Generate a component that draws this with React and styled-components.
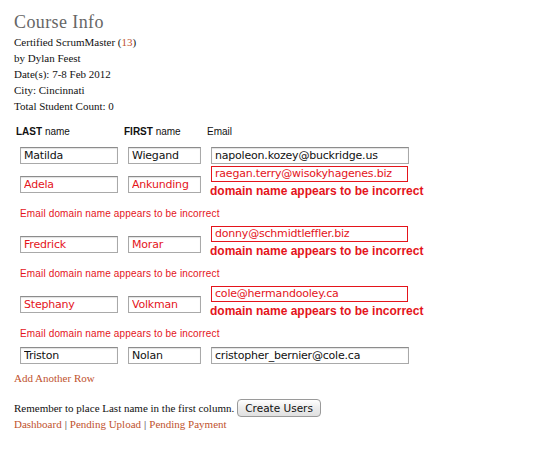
import React from "react";
import styled, { createGlobalStyle } from "styled-components";

const Global = createGlobalStyle`
  body {
    margin: 0;
    background: #ffffff;
    font-family: "Liberation Serif", serif;
  }
`;

const Page = styled.div`
  padding: 11px 14px 20px 14px;
  color: #111;
`;

const Title = styled.h2`
  margin: 0 0 1px 0;
  font-family: "Liberation Serif", serif;
  font-weight: normal;
  font-size: 18px;
  line-height: 22px;
  letter-spacing: 0.4px;
  color: #666;
`;

const Line = styled.div`
  font-size: 11px;
  line-height: 16px;
`;

const Link = styled.a`
  color: #c0522e;
  text-decoration: none;
`;

const Table = styled.div`
  margin-top: 9px;
  margin-left: 2px;
  display: flex;
  flex-direction: column;
  font-family: "Liberation Sans", Arial, sans-serif;
`;

const Row = styled.div`
  display: grid;
  grid-template-columns: 108px 83px auto;
  align-items: center;
  min-height: ${(p) => p.h || 20}px;
`;

const HeadRow = styled(Row)`
  min-height: 18px;
  margin-bottom: 4px;
`;

const HeadCell = styled.div`
  font-size: 10px;
  line-height: 14px;
  color: #111;
  b {
    font-weight: bold;
  }
`;

const Cell = styled.div`
  padding-left: 4px;
  padding-top: ${(p) => (p.low ? 4 : 0)}px;
`;

const Input = styled.input`
  display: block;
  box-sizing: border-box;
  width: ${(p) => p.w}px;
  height: 17px;
  padding: 0 3px;
  margin: 0;
  border: 1px solid #a9a9a9;
  border-top-color: #8c8c8c;
  box-shadow: inset 0 1px 1px rgba(0, 0, 0, 0.12);
  font-family: "DejaVu Sans", sans-serif;
  font-size: 11px;
  letter-spacing: -0.2px;
  line-height: normal;
  color: ${(p) => (p.err ? "#e4141b" : "#111")};
  background: #fff;
  outline: none;
`;

const ErrInput = styled(Input)`
  border: 1px solid #e4141b;
  box-shadow: none;
  height: 16px;
`;

const ErrBold = styled.div`
  font-weight: bold;
  font-size: 12px;
  line-height: 16px;
  color: #e4141b;
  margin-left: -1px;
  margin-top: 1px;
`;

const ErrLine = styled.div`
  font-size: 10px;
  line-height: 14px;
  letter-spacing: 0.15px;
  color: #e4141b;
  padding: 8px 0 4px 4px;
`;

const AddRow = styled.div`
  font-size: 11px;
  line-height: 16px;
  margin-top: 5px;
`;

const Footer = styled.div`
  margin-top: 13px;
  display: flex;
  align-items: center;
  gap: 3px;
  font-size: 11px;
`;

const Button = styled.button`
  height: 18px;
  padding: 0 7px;
  border: 1px solid #9a9a9a;
  border-radius: 4px;
  background: linear-gradient(#ffffff, #ececec 50%, #e0e0e0);
  font-family: "DejaVu Sans", sans-serif;
  font-size: 10.5px;
  line-height: 16px;
  color: #111;
`;

const Links = styled.div`
  font-size: 11px;
  line-height: 16px;
  margin-top: -1px;
  span {
    color: #333;
    margin: 0 3px;
  }
`;

const rows = [
  { last: "Matilda", first: "Wiegand", email: "napoleon.kozey@buckridge.us", bad: false },
  { last: "Adela", first: "Ankunding", email: "raegan.terry@wisokyhagenes.biz", bad: true },
  { last: "Fredrick", first: "Morar", email: "donny@schmidtleffler.biz", bad: true },
  { last: "Stephany", first: "Volkman", email: "cole@hermandooley.ca", bad: true },
  { last: "Triston", first: "Nolan", email: "cristopher_bernier@cole.ca", bad: false },
];

const StudentRow = ({ r }) => (
  <>
    <Row h={r.bad ? 34 : 20}>
      <Cell low={r.bad}>
        <Input w={98} err={r.bad} defaultValue={r.last} />
      </Cell>
      <Cell low={r.bad}>
        <Input w={73} err={r.bad} defaultValue={r.first} />
      </Cell>
      <Cell>
        {r.bad ? (
          <>
            <ErrInput w={197} err defaultValue={r.email} />
            <ErrBold>domain name appears to be incorrect</ErrBold>
          </>
        ) : (
          <Input w={198} defaultValue={r.email} />
        )}
      </Cell>
    </Row>
    {r.bad && <ErrLine>Email domain name appears to be incorrect</ErrLine>}
  </>
);

export default function App() {
  return (
    <Page>
      <Global />
      <Title>Course Info</Title>
      <Line>
        Certified ScrumMaster (<Link href="#">13</Link>)
      </Line>
      <Line>by Dylan Feest</Line>
      <Line>Date(s): 7-8 Feb 2012</Line>
      <Line>City: Cincinnati</Line>
      <Line>Total Student Count: 0</Line>

      <Table>
        <HeadRow>
          <HeadCell>
            <b>LAST</b> name
          </HeadCell>
          <HeadCell>
            <b>FIRST</b> name
          </HeadCell>
          <HeadCell>Email</HeadCell>
        </HeadRow>
        {rows.map((r) => (
          <StudentRow key={r.last} r={r} />
        ))}
      </Table>

      <AddRow>
        <Link href="#">Add Another Row</Link>
      </AddRow>

      <Footer>
        Remember to place Last name in the first column.
        <Button>Create Users</Button>
      </Footer>
      <Links>
        <Link href="#">Dashboard</Link>
        <span>|</span>
        <Link href="#">Pending Upload</Link>
        <span>|</span>
        <Link href="#">Pending Payment</Link>
      </Links>
    </Page>
  );
}
